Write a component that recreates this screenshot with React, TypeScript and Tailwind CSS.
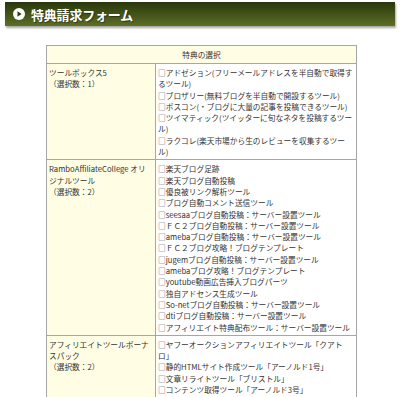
const rows: { name: string; count: number; items: string[] }[] = [
  {
    name: "ツールボックス5",
    count: 1,
    items: [
      "アドゼション(フリーメールアドレスを半自動で取得す\nるツール)",
      "ブロザリー(無料ブログを半自動で開設するツール)",
      "ボスコン(・ブログに大量の記事を投稿できるツール)",
      "ツイマティック(ツイッターに旬なネタを投稿するツー\nル)",
      "ラクコレ(楽天市場から生のレビューを収集するツー\nル)",
    ],
  },
  {
    name: "RamboAffiliateCollege オリ\nジナルツール",
    count: 2,
    items: [
      "楽天ブログ足跡",
      "楽天ブログ自動投稿",
      "優良被リンク解析ツール",
      "ブログ自動コメント送信ツール",
      "seesaaブログ自動投稿：サーバー設置ツール",
      "ＦＣ２ブログ自動投稿：サーバー設置ツール",
      "amebaブログ自動投稿：サーバー設置ツール",
      "ＦＣ２ブログ攻略！ブログテンプレート",
      "jugemブログ自動投稿：サーバー設置ツール",
      "amebaブログ攻略！ブログテンプレート",
      "youtube動画広告挿入ブログパーツ",
      "独自アドセンス生成ツール",
      "So-netブログ自動投稿：サーバー設置ツール",
      "dtiブログ自動投稿：サーバー設置ツール",
      "アフィリエイト特典配布ツール：サーバー設置ツール",
    ],
  },
  {
    name: "アフィリエイトツールボーナ\nスパック",
    count: 2,
    items: [
      "ヤフーオークションアフィリエイトツール「クアト\nロ」",
      "静的HTMLサイト作成ツール「アーノルド1号」",
      "文章リライトツール「ブリストル」",
      "コンテンツ取得ツール「アーノルド3号」",
    ],
  },
];

export default function App() {
  return (
    <div className="min-h-[397px] w-[400px] overflow-hidden bg-white font-['Noto_Sans_CJK_JP','Noto_Sans',sans-serif]">
      <div className="mx-[5px] mt-[2px] flex h-[24px] items-center gap-[6px] bg-gradient-to-b from-[#2a370c] to-[#5c6f25] pl-[8px] shadow-[1px_2px_2px_rgba(0,0,0,0.35)]">
        <svg width="12" height="12" viewBox="0 0 12 12">
          <circle cx="6" cy="6" r="6" fill="#ffffff" />
          <path d="M4.5 3.3 L8.6 6 L4.5 8.7 Z" fill="#2f3b12" />
        </svg>
        <h1 className="text-[13px] font-bold leading-none tracking-[-0.2px] text-white [text-shadow:1px_1px_1px_rgba(0,0,0,0.4)]">
          特典請求フォーム
        </h1>
      </div>

      <div className="mt-[19px] pl-[46px]">
        <table className="w-[311px] table-fixed border-collapse border border-[#8c8c8c] text-[7.7px] leading-[11.3px] text-[#333]">
          <colgroup>
            <col className="w-[109px]" />
            <col />
          </colgroup>
          <thead>
            <tr>
              <th colSpan={2} className="h-[18px] border border-[#a6a6a6] bg-[#fffde4] font-normal">
                特典の選択
              </th>
            </tr>
          </thead>
          <tbody>
            {rows.map((row) => (
              <tr key={row.name}>
                <td className="border border-[#a6a6a6] bg-[#fffde4] px-[2px] pt-[3px] pb-[2px] align-top whitespace-pre-line">
                  {row.name}
                  {"\n"}（選択数：{row.count}）
                </td>
                <td className="border border-[#a6a6a6] bg-white px-[2px] pt-[3px] pb-[2px] align-top">
                  {row.items.map((item) => (
                    <div key={item} className="whitespace-pre-line">
                      □{item}
                    </div>
                  ))}
                </td>
              </tr>
            ))}
          </tbody>
        </table>
      </div>
    </div>
  );
}
